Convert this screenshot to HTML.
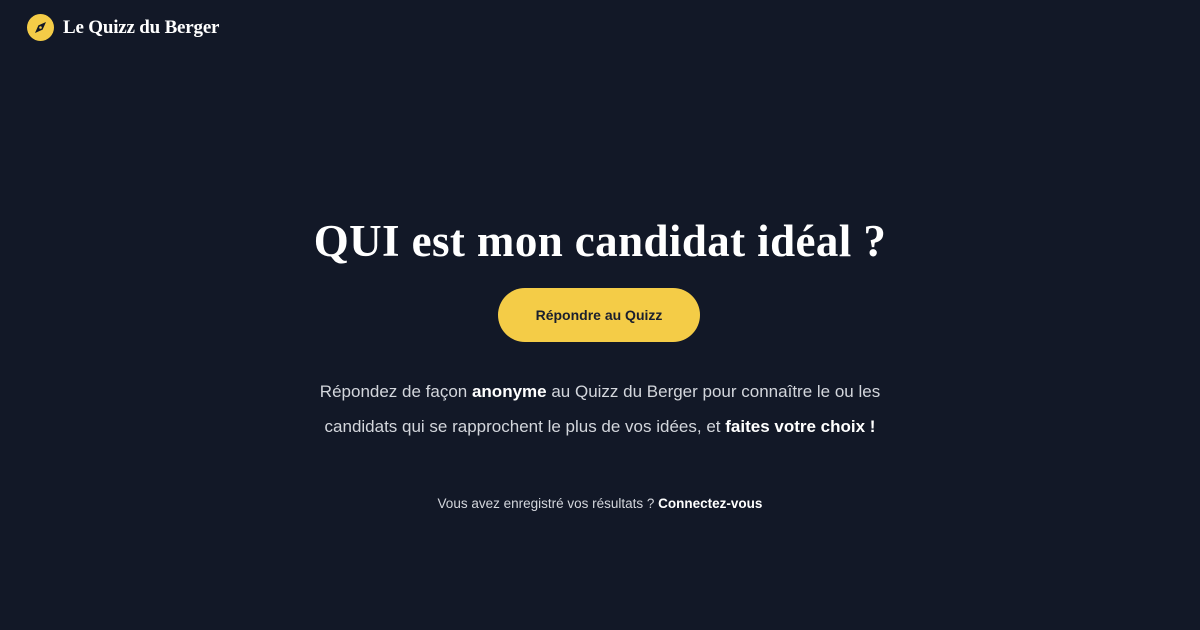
<!DOCTYPE html>
<html><head><meta charset="utf-8"><style>
html,body{margin:0;padding:0;width:1200px;height:630px;background:#121827;overflow:hidden;font-family:"Liberation Sans",sans-serif;}
.logo{position:absolute;left:27px;top:14px;display:flex;align-items:center;}
.logo .t{font-family:"Liberation Serif",serif;font-weight:bold;color:#fff;font-size:19px;margin-left:9px;letter-spacing:-0.2px}
h1{position:absolute;top:214px;left:0;width:1200px;margin:0;text-align:center;font-family:"Liberation Serif",serif;font-weight:bold;color:#fff;font-size:45px;letter-spacing:0.4px;line-height:54px}
.btn{position:absolute;left:498px;top:288px;width:202px;height:54px;border-radius:27px;background:#f4cc47;color:#1a1f2e;font-size:14px;font-weight:bold;display:flex;align-items:center;justify-content:center;}
p{position:absolute;left:250px;width:700px;margin:0;text-align:center;color:#d3d6dc;}
.p1{top:374px;font-size:17px;line-height:35px;}
.p2{top:494px;font-size:13.5px;line-height:20px}
b{color:#fff}
</style></head><body>
<div class="logo">
<svg width="27" height="27" viewBox="0 0 27 27"><circle cx="13.5" cy="13.5" r="13.5" fill="#f4cc47"/><path d="M19 8 L15.6 15.6 L8 19 L11.4 11.4 Z" fill="#121827"/><circle cx="13.5" cy="13.5" r="1.3" fill="#f4cc47"/></svg>
<span class="t">Le Quizz du Berger</span></div>
<h1>QUI est mon candidat idéal ?</h1>
<div class="btn">Répondre au Quizz</div>
<p class="p1">Répondez de façon <b>anonyme</b> au Quizz du Berger pour connaître le ou les<br>candidats qui se rapprochent le plus de vos idées, et <b>faites votre choix !</b></p>
<p class="p2">Vous avez enregistré vos résultats ? <b>Connectez-vous</b></p>
</body></html>
